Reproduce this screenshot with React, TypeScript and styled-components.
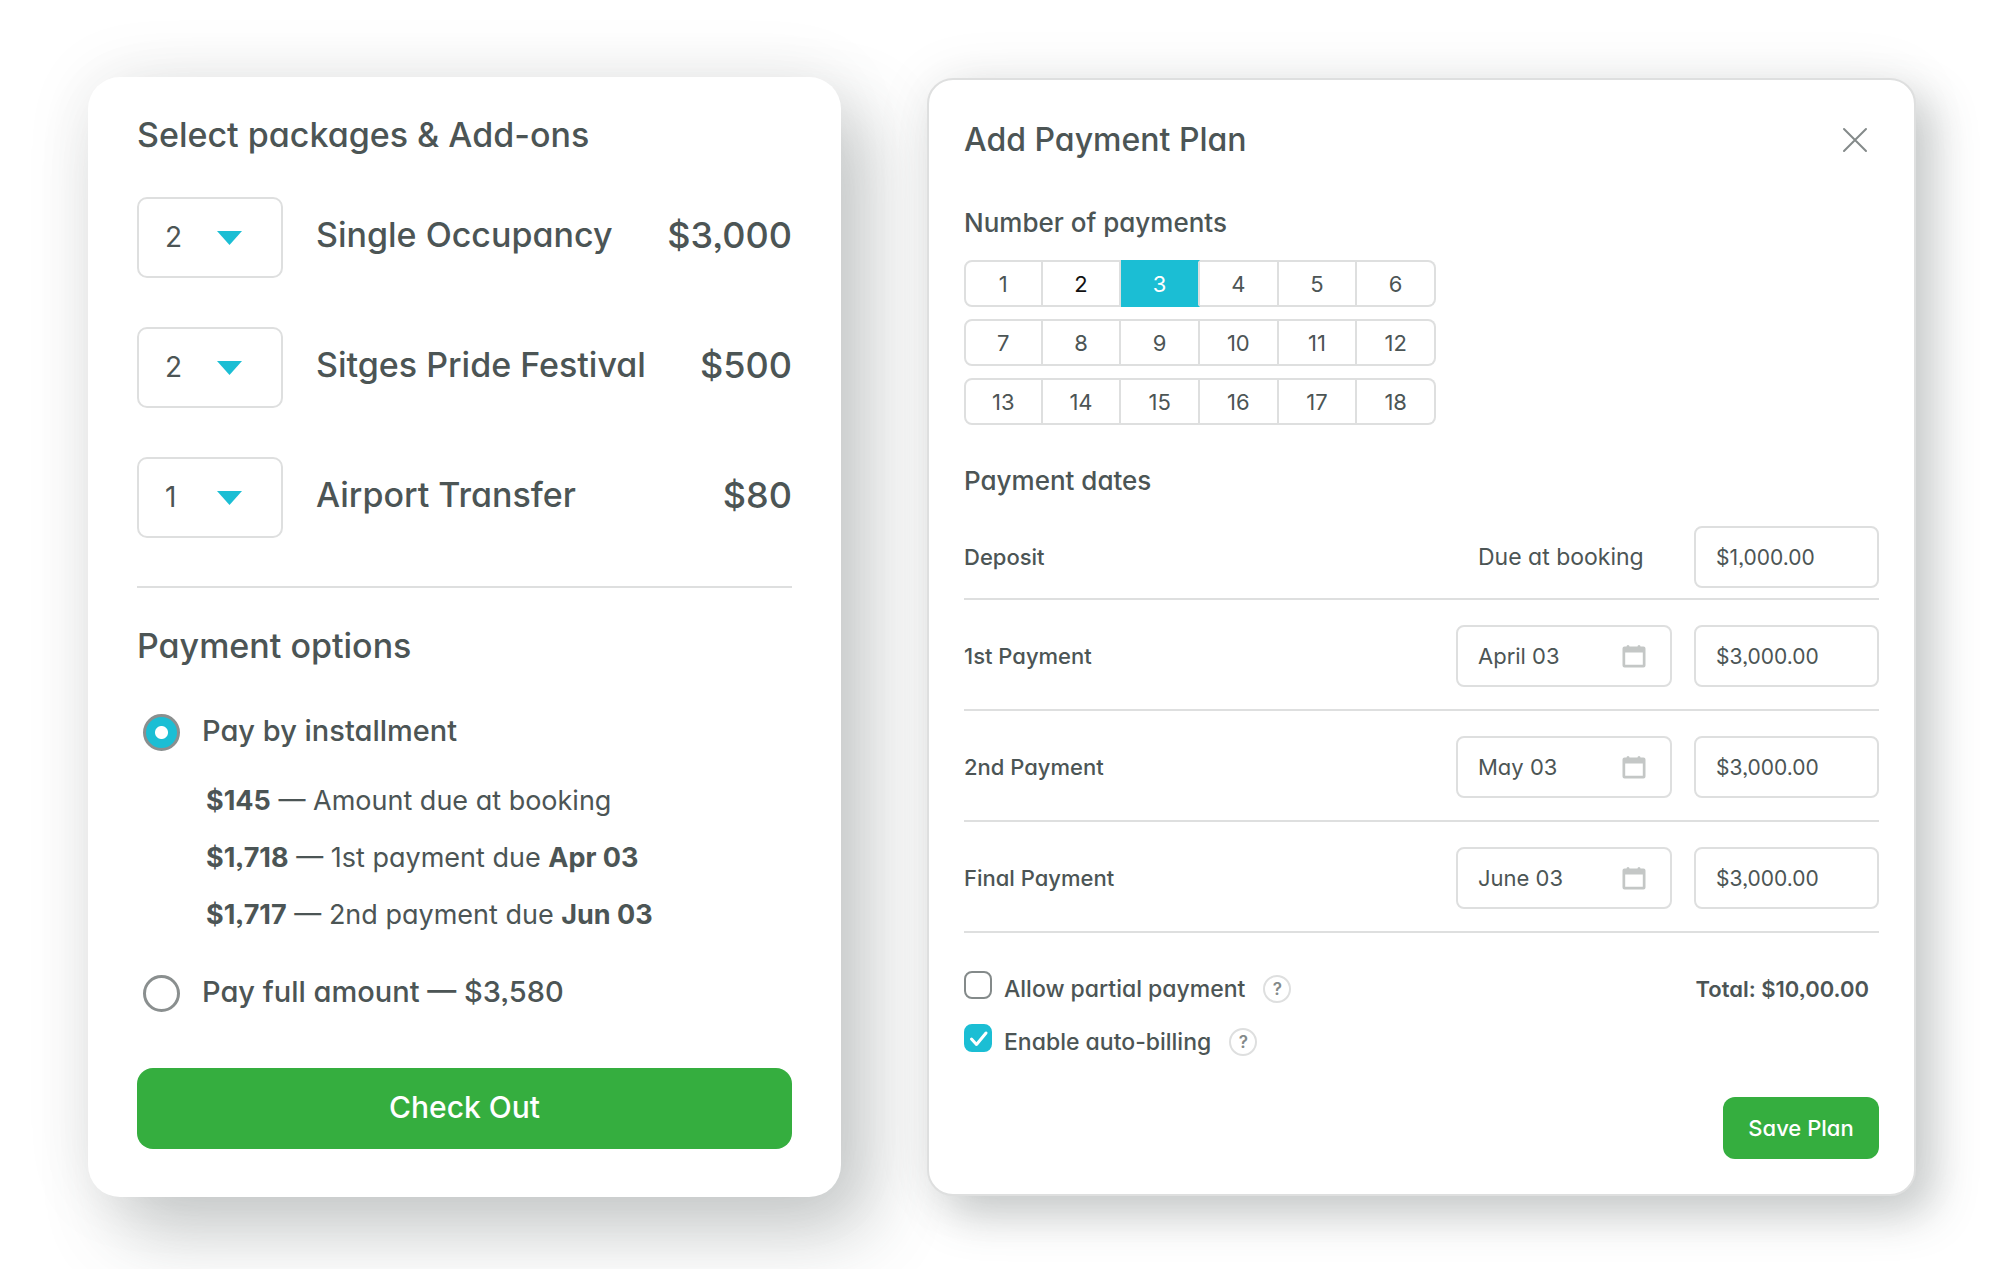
import React, { useState } from "react";
import styled, { createGlobalStyle, css } from "styled-components";

const ink = "#4c5555";
const line = "#dedfdf";
const teal = "#1bbed4";
const green = "#35ae3f";

const GlobalStyle = createGlobalStyle`
  *, *::before, *::after { box-sizing: border-box; }
  body {
    margin: 0;
    background: #fff;
    color: ${ink};
    font-family: Inter, "Open Sans", sans-serif;
    font-feature-settings: "cv11", "ss03";
  }
  button, input, select {
    font-family: inherit;
    font-feature-settings: inherit;
    color: inherit;
    margin: 0;
  }
  h2, h3, p, ul { margin: 0; padding: 0; font-weight: 500; }
  ul { list-style: none; }
`;

const Page = styled.main`
  display: grid;
  grid-template-columns: minmax(0, 753fr) minmax(0, 989fr);
  align-items: center;
  gap: 86px;
  padding: 77px 84px 72px 88px;
`;

const Card = styled.section`
  background: #fff;
`;

const CheckoutCard = styled(Card)`
  padding: 38px 49px 48px;
  border-radius: 32px;
  box-shadow: 30px 36px 72px rgba(76, 85, 85, 0.29), 0 0 70px rgba(0, 0, 0, 0.08);
`;

const PlanCard = styled(Card)`
  padding: 40px 35px 35px;
  border: 2px solid ${line};
  border-radius: 26px;
  box-shadow: 18px 20px 44px rgba(76, 85, 85, 0.28), 0 0 60px rgba(0, 0, 0, 0.07);
`;

const Title = styled.h2<{ $large?: boolean }>`
  font-size: ${(p) => (p.$large ? 34 : 32)}px;
  line-height: 40px;
`;

const Subtitle = styled.h3`
  font-size: 26px;
  line-height: 32px;
`;

const PackageList = styled.ul`
  display: grid;
  gap: 49px;
  margin-top: 42px;
  padding-bottom: 48px;
  border-bottom: 2px solid ${line};
`;

const PackageRow = styled.li`
  display: flex;
  align-items: center;
  height: 81px;
`;

const SelectBox = styled.span`
  position: relative;
  flex: none;
  width: 146px;
  height: 81px;
  margin-right: 33px;
`;

const QuantitySelect = styled.select`
  width: 100%;
  height: 100%;
  padding: 0 28px 2px 26px;
  border: 2px solid ${line};
  border-radius: 10px;
  background: #fff;
  font-size: 28px;
  appearance: none;
`;

const Caret = styled.svg`
  position: absolute;
  top: 34px;
  right: 41px;
  width: 25px;
  height: 14px;
  pointer-events: none;
`;

const PackageName = styled.label`
  flex: 1;
  padding-bottom: 6px;
  font-size: 34px;
  font-weight: 500;
  line-height: 40px;
`;

const Price = styled.span`
  padding-bottom: 6px;
  font-size: 36px;
  font-weight: 500;
  line-height: 40px;
`;

const OptionsTitle = styled(Title)`
  margin-top: 38px;
`;

const PayOption = styled.label<{ $gap: number }>`
  display: flex;
  align-items: center;
  gap: 22px;
  height: 40px;
  margin-top: ${(p) => p.$gap}px;
  padding-left: 6px;
  font-size: 29px;
  font-weight: 500;
`;

const PayText = styled.span`
  padding-bottom: 4px;
`;

const Radio = styled.input`
  flex: none;
  width: 37px;
  height: 37px;
  border: 3px solid #8a8f8f;
  border-radius: 50%;
  background: #fff;
  appearance: none;
  &:checked {
    background: radial-gradient(circle, #fff 6px, ${teal} 7px);
  }
`;

const Schedule = styled.ul`
  margin-top: 20px;
  padding-left: 69px;
  font-size: 27px;
  line-height: 57px;
`;

const ScheduleLine = styled.li`
  font-weight: 400;
  white-space: nowrap;
`;

const Strong = styled.strong`
  font-weight: 700;
`;

const solidButton = css`
  border: 0;
  background: ${green};
  color: #fff;
  font-weight: 500;
  cursor: pointer;
`;

const CheckoutButton = styled.button`
  ${solidButton}
  display: block;
  width: 100%;
  height: 81px;
  margin-top: 55px;
  padding: 0 0 4px;
  border-radius: 16px;
  font-size: 30px;
`;

const PlanHeader = styled.header`
  display: flex;
  align-items: center;
  justify-content: space-between;
  margin-bottom: 47px;
`;

const CloseButton = styled.button`
  display: grid;
  place-items: center;
  width: 48px;
  height: 40px;
  padding: 0;
  border: 0;
  background: none;
  color: #848a8a;
  cursor: pointer;
`;

const CountRows = styled.div`
  display: grid;
  gap: 12px;
  width: 472px;
  max-width: 100%;
  margin: 21px 0 40px;
`;

const CountRow = styled.div`
  display: grid;
  grid-template-columns: repeat(6, 1fr);
`;

const CountButton = styled.button<{ $strong?: boolean }>`
  height: 47px;
  padding: 0;
  border: solid ${line};
  border-width: 2px 2px 2px 0;
  background: #fff;
  color: ${(p) => (p.$strong ? "#111" : ink)};
  font-size: 22px;
  cursor: pointer;
  &:first-child { border-left-width: 2px; border-radius: 8px 0 0 8px; }
  &:last-child { border-radius: 0 8px 8px 0; }
  &[aria-pressed="true"] {
    border-block-color: ${teal};
    background: ${teal};
    color: #fff;
  }
`;

const DateRows = styled.div`
  margin-top: 29px;
`;

const DateRow = styled.div`
  display: flex;
  align-items: center;
  gap: 22px;
  padding: 25px 0 22px;
  border-bottom: 2px solid ${line};
  &:first-child { padding: 0 0 10px; }
`;

const RowName = styled.span`
  flex: 1;
  font-size: 22px;
  font-weight: 500;
  line-height: 28px;
`;

const DueNote = styled.span`
  width: 216px;
  padding-left: 22px;
  font-size: 23px;
  line-height: 28px;
  white-space: nowrap;
`;

const DateField = styled.span`
  display: flex;
  align-items: center;
  width: 216px;
  height: 62px;
  padding-right: 24px;
  border: 2px solid ${line};
  border-radius: 8px;
`;

const DateInput = styled.input`
  flex: 1;
  min-width: 0;
  height: 100%;
  padding: 0 0 0 20px;
  border: 0;
  background: none;
  font-size: 22px;
`;

const AmountInput = styled.input`
  width: 185px;
  height: 62px;
  padding: 0 20px;
  border: 2px solid ${line};
  border-radius: 8px;
  background: #fff;
  font-size: 21px;
`;

const Extras = styled.div`
  display: flex;
  justify-content: space-between;
  margin-top: 38px;
`;

const Checks = styled.div`
  display: grid;
  gap: 17px;
`;

const CheckRow = styled.div`
  display: flex;
  align-items: center;
  height: 36px;
`;

const CheckLabel = styled.label`
  display: flex;
  gap: 12px;
  margin-right: 18px;
  font-size: 23px;
  font-weight: 500;
  line-height: 36px;
`;

const CheckHolder = styled.span`
  position: relative;
  width: 28px;
  height: 28px;
`;

const TickMark = styled.svg`
  position: absolute;
  inset: 0;
  pointer-events: none;
`;

const Tick = () => (
  <TickMark viewBox="0 0 28 28" aria-hidden="true">
    <path d="M7.5 15l5 5.5 9.500-11.500" fill="none" stroke="#fff" strokeWidth="3" strokeLinecap="round" strokeLinejoin="round" />
  </TickMark>
);

const Checkbox = styled.input`
  display: block;
  width: 28px;
  height: 28px;
  border: 2px solid #848a8a;
  border-radius: 8px;
  background: #fff;
  appearance: none;
  &:checked {
    border-color: ${teal};
    background: ${teal};
  }
`;

const HelpButton = styled.button`
  display: grid;
  place-items: center;
  width: 28px;
  height: 28px;
  padding: 0;
  border: 2px solid ${line};
  border-radius: 50%;
  background: #fff;
  color: #848a8a;
  font-size: 17px;
  font-weight: 600;
  line-height: 20px;
`;

const Total = styled.p`
  padding-right: 10px;
  font-size: 22px;
  font-weight: 600;
  line-height: 36px;
`;

const PlanFooter = styled.footer`
  display: flex;
  justify-content: flex-end;
  margin-top: 37px;
`;

const SaveButton = styled.button`
  ${solidButton}
  width: 156px;
  height: 62px;
  padding: 0;
  border-radius: 12px;
  font-size: 22px;
`;

const CalendarIcon = () => (
  <svg width="24" height="23" viewBox="0 0 24 23" aria-hidden="true">
    <path
      fill="#c4c7c6"
      fillRule="evenodd"
      d="M4.500 1.500Q4.500 0 6 0T7.500 1.500H15.500Q15.500 0 17 0T18.500 1.500H21.500Q23.500 1.500 23.500 3.500V20.500Q23.500 22.500 21.500 22.500H2.500Q.5 22.500 .5 20.500V3.500Q.5 1.500 2.500 1.500ZM3.200 7.500V19.800H20.800V7.500Z"
    />
  </svg>
);

const packages = [
  { id: "single", name: "Single Occupancy", price: "$3,000", quantity: 2 },
  { id: "festival", name: "Sitges Pride Festival", price: "$500", quantity: 2 },
  { id: "transfer", name: "Airport Transfer", price: "$80", quantity: 1 },
];

const payments = [
  { name: "1st Payment", date: "April 03", amount: "$3,000.00" },
  { name: "2nd Payment", date: "May 03", amount: "$3,000.00" },
  { name: "Final Payment", date: "June 03", amount: "$3,000.00" },
];

const countRows = [0, 6, 12].map((start) => [1, 2, 3, 4, 5, 6].map((n) => start + n));

function Checkout() {
  return (
    <CheckoutCard>
      <Title $large>Select packages &amp; Add-ons</Title>
      <PackageList>
        {packages.map((p) => (
          <PackageRow key={p.id}>
            <SelectBox>
              <QuantitySelect id={p.id} defaultValue={p.quantity}>
                <option>1</option>
                <option>2</option>
                <option>3</option>
              </QuantitySelect>
              <Caret viewBox="0 0 25 14" aria-hidden="true">
                <path d="M0 0h25L12.500 14z" fill={teal} />
              </Caret>
            </SelectBox>
            <PackageName htmlFor={p.id}>{p.name}</PackageName>
            <Price>{p.price}</Price>
          </PackageRow>
        ))}
      </PackageList>
      <OptionsTitle $large>Payment options</OptionsTitle>
      <PayOption $gap={46}>
        <Radio type="radio" name="pay" defaultChecked />
        <PayText>Pay by installment</PayText>
      </PayOption>
      <Schedule>
        <ScheduleLine><Strong>$145</Strong> — Amount due at booking</ScheduleLine>
        <ScheduleLine><Strong>$1,718</Strong> — 1st payment due <Strong>Apr 03</Strong></ScheduleLine>
        <ScheduleLine><Strong>$1,717</Strong> — 2nd payment due <Strong>Jun 03</Strong></ScheduleLine>
      </Schedule>
      <PayOption $gap={30}>
        <Radio type="radio" name="pay" />
        <PayText>Pay full amount — $3,580</PayText>
      </PayOption>
      <CheckoutButton type="button">Check Out</CheckoutButton>
    </CheckoutCard>
  );
}

function CheckOption({ label, checked, onChange }: { label: string; checked: boolean; onChange: (v: boolean) => void }) {
  return (
    <CheckRow>
      <CheckLabel>
        <CheckHolder>
          <Checkbox type="checkbox" checked={checked} onChange={(e) => onChange(e.target.checked)} />
          {checked && <Tick />}
        </CheckHolder>
        {label}
      </CheckLabel>
      <HelpButton type="button" aria-label={`Help: ${label}`}>?</HelpButton>
    </CheckRow>
  );
}

function PaymentPlan() {
  const [count, setCount] = useState(3);
  const [partial, setPartial] = useState(false);
  const [autoBilling, setAutoBilling] = useState(true);
  return (
    <PlanCard>
      <PlanHeader>
        <Title>Add Payment Plan</Title>
        <CloseButton type="button" aria-label="Close">
          <svg width="26" height="26" viewBox="0 0 26 26" aria-hidden="true">
            <path d="M2 2l22 22M24 2L2 24" stroke="currentColor" strokeWidth="2" strokeLinecap="round" />
          </svg>
        </CloseButton>
      </PlanHeader>
      <Subtitle>Number of payments</Subtitle>
      <CountRows>
        {countRows.map((row) => (
          <CountRow key={row[0]}>
            {row.map((n) => (
              <CountButton key={n} type="button" $strong={n === 2} aria-pressed={n === count} onClick={() => setCount(n)}>
                {n}
              </CountButton>
            ))}
          </CountRow>
        ))}
      </CountRows>
      <Subtitle>Payment dates</Subtitle>
      <DateRows>
        <DateRow>
          <RowName>Deposit</RowName>
          <DueNote>Due at booking</DueNote>
          <AmountInput aria-label="Deposit amount" defaultValue="$1,000.00" />
        </DateRow>
        {payments.map((p) => (
          <DateRow key={p.name}>
            <RowName>{p.name}</RowName>
            <DateField>
              <DateInput aria-label={`${p.name} date`} defaultValue={p.date} />
              <CalendarIcon />
            </DateField>
            <AmountInput aria-label={`${p.name} amount`} defaultValue={p.amount} />
          </DateRow>
        ))}
      </DateRows>
      <Extras>
        <Checks>
          <CheckOption label="Allow partial payment" checked={partial} onChange={setPartial} />
          <CheckOption label="Enable auto-billing" checked={autoBilling} onChange={setAutoBilling} />
        </Checks>
        <Total>Total: $10,00.00</Total>
      </Extras>
      <PlanFooter>
        <SaveButton type="button">Save Plan</SaveButton>
      </PlanFooter>
    </PlanCard>
  );
}

export default function App() {
  return (
    <>
      <GlobalStyle />
      <Page>
        <Checkout />
        <PaymentPlan />
      </Page>
    </>
  );
}
